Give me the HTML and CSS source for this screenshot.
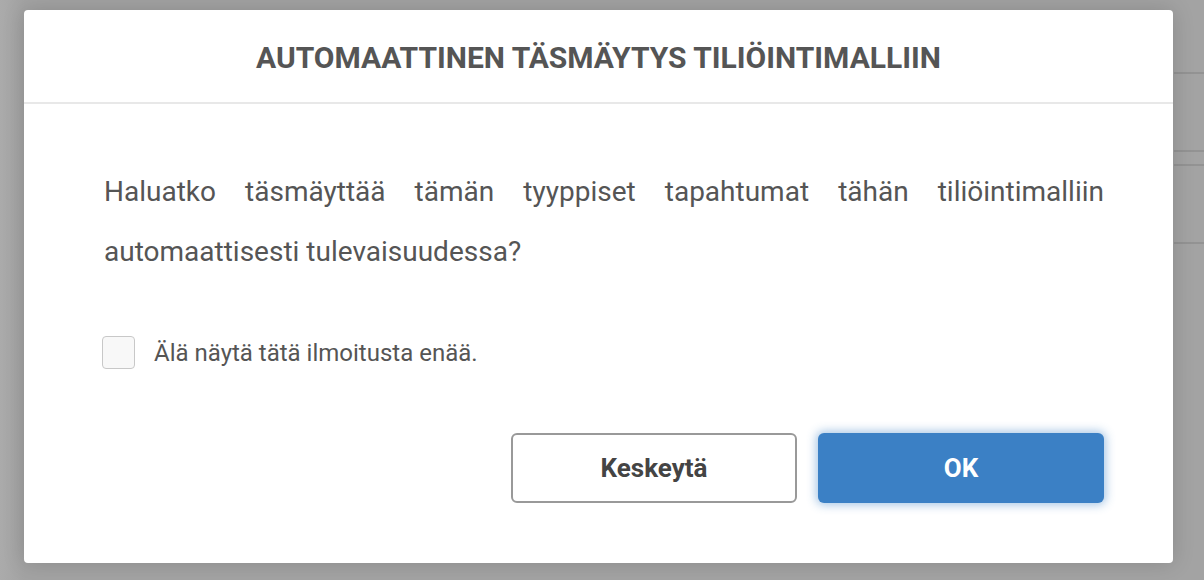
FILE: index.html
```html
<!DOCTYPE html>
<html lang="fi">
<head>
<meta charset="utf-8">
<title>Automaattinen täsmäytys</title>
<link rel="stylesheet" href="styles.css">
</head>
<body>
<div class="overlay">
  <div class="dialog">
    <div class="dialog-header">
      <h1 class="dialog-title">AUTOMAATTINEN TÄSMÄYTYS TILIÖINTIMALLIIN</h1>
    </div>
    <div class="dialog-body">
      <p class="message">Haluatko täsmäyttää tämän tyyppiset tapahtumat tähän tiliöintimalliin automaattisesti tulevaisuudessa?</p>
      <label class="check-row">
        <span class="checkbox"></span>
        <span class="check-label">Älä näytä tätä ilmoitusta enää.</span>
      </label>
      <div class="actions">
        <button class="btn btn-secondary">Keskeytä</button>
        <button class="btn btn-primary">OK</button>
      </div>
    </div>
  </div>
</div>
</body>
</html>
```
FILE: styles.css
```css
html, body {
  margin: 0;
  padding: 0;
  height: 100%;
}
body {
  font-family: Roboto, "Liberation Sans", Arial, sans-serif;
  background-color: #a3a3a3;
  background-image:
    linear-gradient(to bottom,
      transparent 72px, #939393 72px, #939393 74px, transparent 74px,
      transparent 150px, #939393 150px, #939393 152px, transparent 152px,
      transparent 164px, #939393 164px, #939393 166px, transparent 166px,
      transparent 242px, #939393 242px, #939393 244px, transparent 244px),
    linear-gradient(to right, #ababab, #a3a3a3 24px);
  background-size: 30px 100%, 100% 100%;
  background-position: right top, left top;
  background-repeat: no-repeat;
  overflow: hidden;
}
.overlay {
  padding: 10px 31px 0 24px;
}
.dialog {
  width: 1149px;
  height: 553px;
  background: #fff;
  border-radius: 4px;
  box-shadow: 0 0 22px rgba(0,0,0,0.16);
  display: flex;
  flex-direction: column;
  box-sizing: border-box;
}
.dialog-header {
  height: 94px;
  border-bottom: 2px solid #e8e8e8;
  display: flex;
  align-items: center;
  justify-content: center;
  box-sizing: border-box;
  padding-top: 2px;
}
.dialog-title {
  margin: 0;
  font-size: 30px;
  font-weight: 700;
  color: #555;
}
.dialog-body {
  padding: 58px 69px 0 80px;
  display: flex;
  flex-direction: column;
}
.message {
  margin: 0;
  font-size: 28px;
  line-height: 60px;
  color: #555;
  text-align: justify;
}
.check-row {
  margin-top: 54px;
  display: flex;
  align-items: center;
  gap: 19px;
}
.checkbox {
  width: 33px;
  height: 33px;
  margin-left: -2px;
  border: 1px solid #c8c8c8;
  border-radius: 4px;
  background: #f8f8f8;
  box-sizing: border-box;
  display: block;
  flex: none;
}
.check-label {
  font-size: 24px;
  color: #555;
}
.actions {
  margin-top: 64px;
  display: flex;
  justify-content: flex-end;
  gap: 21px;
}
.btn {
  width: 286px;
  height: 70px;
  border-radius: 6px;
  font-family: Roboto, "Liberation Sans", Arial, sans-serif;
  font-size: 26px;
  font-weight: 700;
  box-sizing: border-box;
  cursor: pointer;
}
.btn-secondary {
  background: #fff;
  border: 2px solid #999;
  color: #444;
}
.btn-primary {
  background: #3b80c5;
  border: none;
  color: #fff;
  box-shadow: 0 0 10px 2px rgba(59,128,197,0.45);
}
```
